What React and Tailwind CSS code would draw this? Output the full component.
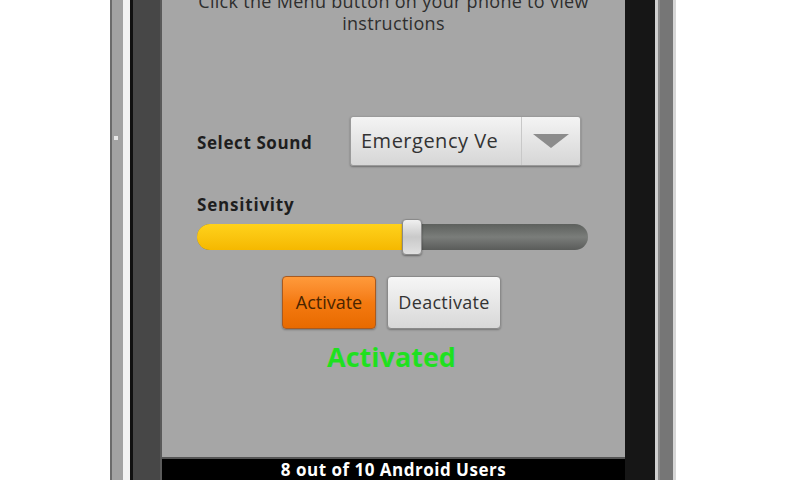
export default function App() {
  return (
    <div className="w-[800px] h-[480px] overflow-hidden bg-white flex" style={{ fontFamily: '"Open Sans", "Noto Sans", sans-serif' }}>
      {/* left bezel strips */}
      <div className="w-[110px] shrink-0 bg-white" />
      <div className="w-[2px] shrink-0 bg-[#6a6a6a]" />
      <div className="w-[11px] shrink-0 bg-[#a2a2a2] relative">
        <div className="absolute left-[2px] top-[136px] w-[4px] h-[4px] bg-[#e8e8e8]" />
      </div>
      <div className="w-[7px] shrink-0 bg-[#f2f2f2]" />
      <div className="w-[3px] shrink-0 bg-[#111]" />
      <div className="w-[27px] shrink-0 bg-[#474747]" />
      <div className="w-[2px] shrink-0 bg-[#5a5a5a]" />

      {/* screen */}
      <div className="w-[463px] shrink-0 flex flex-col bg-[#a6a6a6]">
        <div className="flex-1 flex flex-col">
          <p className="-mt-[10px] text-center text-[18px] tracking-[0.3px] leading-[22px] text-[#2e2e2e] whitespace-nowrap">
            Click the Menu button on your phone to view<br />instructions
          </p>

          <div className="flex items-center mt-[82px] pl-[35px]">
            <span className="w-[153px] text-[17px] tracking-[0.6px] font-bold text-[#1e1e1e] pt-[3px]">Select Sound</span>
            <div className="w-[231px] h-[50px] rounded-[3px] bg-gradient-to-b from-[#f4f4f4] to-[#d6d6d6] border border-[#9a9a9a] shadow-[0_1px_2px_rgba(0,0,0,0.35)] flex items-center">
              <span className="w-[170px] pl-[10px] text-[20px] tracking-[0.5px] text-[#333] whitespace-nowrap overflow-hidden">Emergency Ve</span>
              <div className="w-[1px] h-full bg-[#c8c8c8]" />
              <div className="flex-1 flex items-center justify-center">
                <svg width="36" height="14" viewBox="0 0 36 14">
                  <polygon points="0,0 36,0 18,14" fill="#8c8c8c" />
                </svg>
              </div>
            </div>
          </div>

          <div className="pl-[35px] mt-[28px] text-[17px] tracking-[0.8px] font-bold text-[#1e1e1e] leading-[22px]">Sensitivity</div>

          <div className="relative ml-[35px] w-[391px] h-[36px] mt-[3px] flex items-center">
            <div className="w-full h-[26px] rounded-full bg-gradient-to-b from-[#5d605d] via-[#7a7d7a] to-[#5a5c5a] flex overflow-hidden">
              <div className="w-[210px] h-full bg-gradient-to-b from-[#ffd21a] to-[#f5b800]" />
            </div>
            <div className="absolute left-[205px] top-0 w-[20px] h-[36px] rounded-[4px] bg-gradient-to-b from-[#f0f0f0] via-[#c9c9c9] to-[#e0e0e0] border border-[#8a8a8a] shadow-[0_1px_2px_rgba(0,0,0,0.4)]" />
          </div>

          <div className="flex justify-center gap-[11px] mt-[21px] pr-[4px]">
            <div className="w-[94px] h-[53px] rounded-[4px] bg-gradient-to-b from-[#ff9a3a] via-[#f47a10] to-[#e86a00] border border-[#a85a20] flex items-center justify-center text-[18px] text-[#4a2400] shadow-[0_1px_2px_rgba(0,0,0,0.3)]">Activate</div>
            <div className="w-[114px] h-[53px] rounded-[4px] bg-gradient-to-b from-[#f6f6f6] to-[#d8d8d8] border border-[#8a8a8a] flex items-center justify-center text-[18px] tracking-[0.3px] text-[#333] shadow-[0_1px_2px_rgba(0,0,0,0.3)]">Deactivate</div>
          </div>

          <div className="text-center mt-[13px] text-[27px] font-bold text-[#1fe01f] leading-[30px] pr-[4px]">Activated</div>
        </div>

        <div className="h-[23px] bg-black border-t-2 border-[#555] flex items-center justify-center text-white text-[17px] tracking-[0.5px] font-bold leading-none">
          8 out of 10 Android Users
        </div>
      </div>

      {/* right bezel strips */}
      <div className="w-[30px] shrink-0 bg-[#161616]" />
      <div className="w-[3px] shrink-0 bg-[#cfcfcf]" />
      <div className="w-[2px] shrink-0 bg-[#8a8a8a]" />
      <div className="w-[13px] shrink-0 bg-[#767676]" />
      <div className="w-[3px] shrink-0 bg-[#d6d6d6]" />
      <div className="flex-1 bg-white" />
    </div>
  );
}
